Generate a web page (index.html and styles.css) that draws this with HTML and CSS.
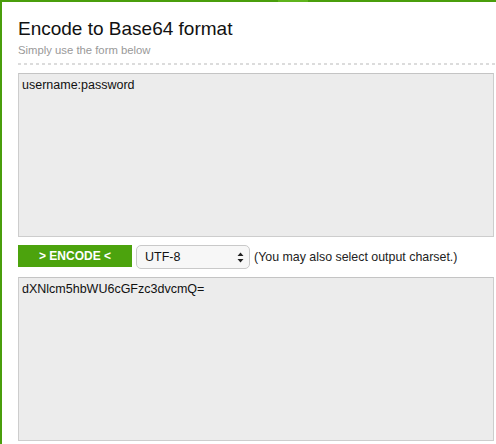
FILE: index.html
```html
<!DOCTYPE html>
<html>
<head>
<meta charset="utf-8">
<title>Encode to Base64 format</title>
<link rel="stylesheet" href="styles.css">
</head>
<body>
<div class="topbar"><span class="topbar-hl"></span></div>
<div class="page">
  <h1 class="title">Encode to Base64 format</h1>
  <p class="subtitle">Simply use the form below</p>
  <div class="divider"></div>
  <div class="box">username:password</div>
  <div class="controls">
    <button class="btn">&gt; ENCODE &lt;</button>
    <div class="select">
      <span>UTF-8</span>
      <svg class="arrows" width="7" height="11" viewBox="0 0 7 11"><path d="M3.5 0.5 L6.5 4 L0.5 4 Z M3.5 10.5 L6.5 7 L0.5 7 Z" fill="#222"/></svg>
    </div>
    <span class="hint">(You may also select output charset.)</span>
  </div>
  <div class="box">dXNlcm5hbWU6cGFzc3dvcmQ=</div>
</div>
</body>
</html>
```
FILE: styles.css
```css
html, body {
  margin: 0;
  padding: 0;
  background: #fff;
  font-family: "Liberation Sans", Arial, sans-serif;
  color: #111;
  overflow: hidden;
}
.topbar {
  height: 2px;
  background: #4a9e0c;
  position: relative;
}
.topbar-hl {
  position: absolute;
  left: 278px;
  width: 30px;
  top: 0;
  height: 2px;
  background: #5fb41c;
}
.page {
  border-left: 2px solid #4a9e0c;
  padding: 16px 2px 0 16px;
  height: 442px;
  box-sizing: border-box;
}
.title {
  margin: 0;
  font-size: 19px;
  line-height: 22px;
  font-weight: normal;
  color: #111;
}
.subtitle {
  margin: 4px 0 0;
  font-size: 11.3px;
  line-height: 13px;
  color: #999;
}
.divider {
  margin: 6px -2px 0 0;
  height: 2px;
  background-image: repeating-linear-gradient(to right, #dcdcdc 0, #dcdcdc 3px, transparent 3px, transparent 6px);
}
.box {
  margin-top: 8px;
  height: 164px;
  box-sizing: border-box;
  background: #ececec;
  border: 1px solid #cdcdcd;
  border-top-color: #c4c4c4;
  padding: 4px 3px;
  font-size: 12.5px;
  line-height: 15px;
  color: #111;
}
.controls {
  display: flex;
  align-items: center;
  margin-top: 8px;
  height: 24px;
}
.btn {
  width: 114px;
  height: 22px;
  border: 0;
  margin: 0 4px 0 0;
  padding: 0;
  background: #4ca30d;
  color: #fff;
  font-family: "Liberation Sans", Arial, sans-serif;
  font-weight: bold;
  font-size: 12px;
  align-self: flex-start;
}
.select {
  width: 114px;
  height: 24px;
  box-sizing: border-box;
  border: 1px solid #c9c9c9;
  border-radius: 5px;
  background: #f7f7f7;
  display: flex;
  align-items: center;
  justify-content: space-between;
  padding: 0 5px 0 8px;
  font-size: 12.5px;
  color: #111;
}
.arrows {
  display: block;
}
.hint {
  margin-left: 4px;
  font-size: 12.4px;
  color: #222;
}
```
